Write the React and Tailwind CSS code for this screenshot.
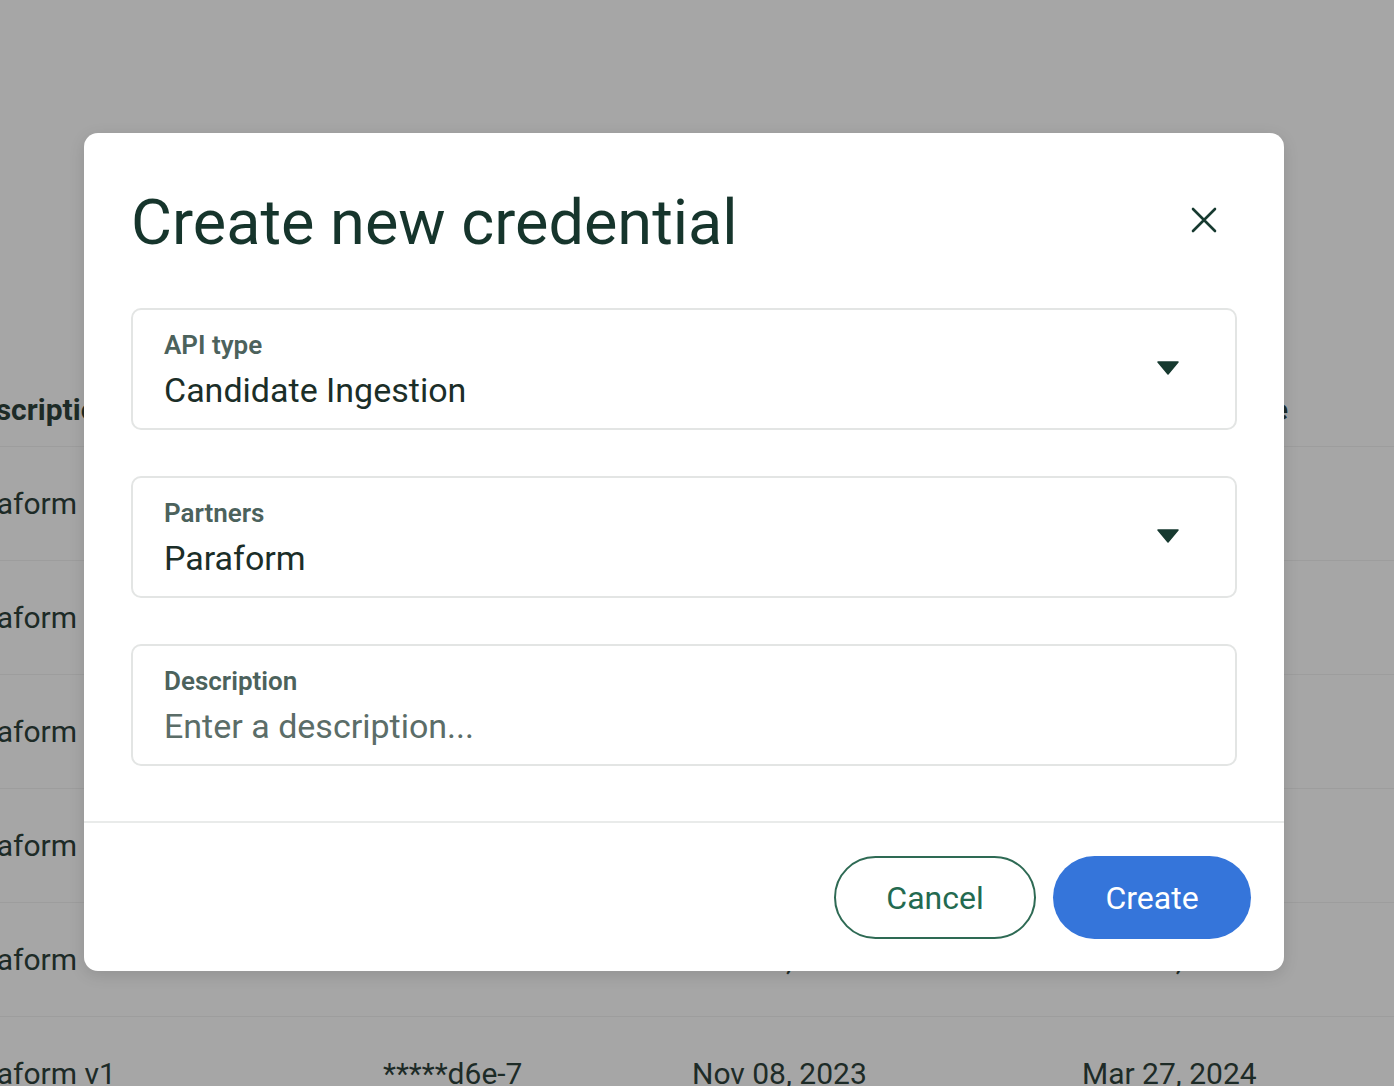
import React from "react";

const rows = [
  ["Paraform", "", "", ""],
  ["Paraform", "", "", ""],
  ["Paraform", "", "", ""],
  ["Paraform", "", "", ""],
  ["Paraform", "*****a1c-3", "Nov 08, 2023", "Mar 27, 2024"],
  ["Paraform v1", "*****d6e-7", "Nov 08, 2023", "Mar 27, 2024"],
];

function Field({ label, value, placeholder, select }) {
  return (
    <div className="flex h-[122px] items-center rounded-[10px] border-2 border-[#e3e5e4] bg-white pl-[31px] pr-[56px]">
      <div className="flex flex-1 flex-col">
        <div className="text-[26px] leading-[34px] font-semibold text-[#4c625c]">{label}</div>
        <div
          className={
            "mt-[8px] text-[34px] leading-[40px] " +
            (placeholder ? "text-[#5b6d68]" : "text-[#1b2e28]")
          }
        >
          {value || placeholder}
        </div>
      </div>
      {select && (
        <svg width="22" height="14" viewBox="0 0 22 14" className="mt-[-2px]">
          <path d="M1 1 L21 1 L11 13 Z" fill="#173a30" stroke="#173a30" strokeWidth="1.5" strokeLinejoin="round" />
        </svg>
      )}
    </div>
  );
}

export default function App() {
  return (
    <div
      className="relative h-[1086px] w-[1394px] overflow-hidden bg-[#a6a6a6]"
      style={{ fontFamily: "Roboto, 'Liberation Sans', sans-serif" }}
    >
      {/* background table */}
      <div className="pt-[373px] text-[30px] text-[#1d2b27]">
        <div className="grid h-[74px] grid-cols-[427px_309px_390px_1fr] items-center border-b border-[#9d9d9d] ml-[-44px] font-bold">
          <div className="ml-[4px]">Description</div>
          <div>Key</div>
          <div>Created</div>
          <div className="w-[206px] text-right">Last use</div>
        </div>
        {rows.map((r, i) => (
          <div
            key={i}
            className="grid h-[114px] grid-cols-[427px_309px_390px_1fr] items-center border-b border-[#9d9d9d] ml-[-44px]"
          >
            <div className="ml-[-4px]">{r[0]}</div>
            <div>{r[1]}</div>
            <div>{r[2]}</div>
            <div>{r[3]}</div>
          </div>
        ))}
      </div>

      {/* modal */}
      <div className="absolute left-[84px] top-[133px] w-[1200px] rounded-[14px] bg-white shadow-[0_4px_16px_rgba(0,0,0,0.12)]">
        <div className="px-[47px]">
          <div className="flex items-start justify-between pt-[52px]">
            <h1 className="text-[63px] leading-[76px] font-normal text-[#16352c]">
              Create new credential
            </h1>
            <button className="mr-[18px] mt-[20px] flex h-[30px] w-[30px] items-center justify-center">
              <svg width="26" height="26" viewBox="0 0 26 26">
                <path d="M2 2 L24 24 M24 2 L2 24" stroke="#173a30" strokeWidth="2.6" strokeLinecap="round" />
              </svg>
            </button>
          </div>
          <div className="mt-[47px] flex flex-col gap-[46px]">
            <Field label="API type" value="Candidate Ingestion" select />
            <Field label="Partners" value="Paraform" select />
            <Field label="Description" placeholder="Enter a description..." />
          </div>
        </div>
        <div className="mt-[55px] border-t-2 border-[#e9ebea]" />
        <div className="flex justify-end gap-[17px] pb-[32px] pr-[33px] pt-[33px]">
          <button className="h-[83px] w-[202px] rounded-full border-2 border-[#2e6a54] text-[32px] text-[#236a50]">
            Cancel
          </button>
          <button className="h-[83px] w-[198px] rounded-full bg-[#3575da] text-[32px] text-white">
            Create
          </button>
        </div>
      </div>
    </div>
  );
}
